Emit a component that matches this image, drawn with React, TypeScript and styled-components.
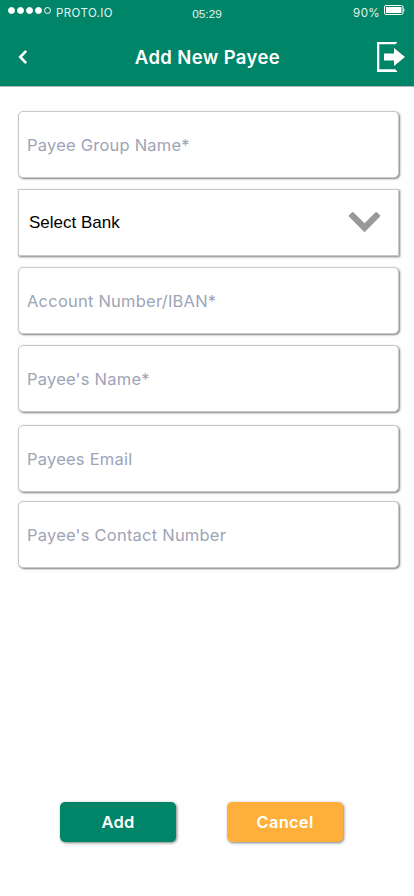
import React from "react";
import styled, { createGlobalStyle } from "styled-components";

const GlobalStyle = createGlobalStyle`
  *, *::before, *::after { box-sizing: border-box; }
  html, body { margin: 0; padding: 0; background: #fefefe; }
  body { font-family: Inter, sans-serif; }
`;

const Screen = styled.div`
  width: 414px;
  height: 896px;
  display: flex;
  flex-direction: column;
  background: #fefefe;
  overflow: hidden;
`;

const Header = styled.header`
  height: 87px;
  flex: none;
  background: #008568;
  border-bottom: 1px solid #b5b8b7;
  color: #fff;
`;

const StatusBar = styled.div`
  height: 27px;
  display: grid;
  grid-template-columns: 1fr auto 1fr;
  align-items: start;
  padding: 0 8px;
`;

const Carrier = styled.div`
  display: flex;
  align-items: flex-start;
  font-size: 11.5px;
  line-height: 14px;
  letter-spacing: 0.4px;
  color: #e4f3ef;
`;

const Signal = styled.div`
  display: flex;
  gap: 2px;
  margin: 7px 5px 0 0;
`;

const Dot = styled.i<{ $hollow?: boolean }>`
  width: 7px;
  height: 7px;
  border-radius: 50%;
  border: 1px solid #fff;
  background: ${(p) => (p.$hollow ? "transparent" : "#fff")};
`;

const StatusText = styled.span`
  margin-top: 6px;
`;

const Clock = styled.time`
  margin-top: 7px;
  font: 11.8px/14px "Liberation Sans", sans-serif;
  color: #e4f3ef;
`;

const Power = styled(Carrier)`
  justify-content: flex-end;
  gap: 4px;
  margin-right: 1px;

  svg { margin-top: 5px; display: block; }
`;

const TitleBar = styled.div`
  height: 59px;
  display: grid;
  grid-template-columns: 46px 1fr 46px;
  align-items: center;
`;

const IconButton = styled.button`
  border: 0;
  padding: 0;
  background: none;
  width: 46px;
  height: 59px;

  svg { display: block; }
`;

const Title = styled.h1`
  margin: 0;
  padding-left: 1px;
  text-align: center;
  font-size: 18.5px;
  font-weight: 600;
  letter-spacing: 0.38px;
  line-height: 24px;
`;

const Form = styled.form`
  flex: 1;
  display: flex;
  flex-direction: column;
  padding: 24px 15px 54px 18px;
`;

const Field = styled.input<{ $gap?: number }>`
  width: 381px;
  height: 67px;
  flex: none;
  margin: 0 0 ${(p) => p.$gap ?? 11}px;
  padding: 1px 8px 0;
  border: 1px solid #c8c8c8;
  border-radius: 5px;
  background: #fff;
  box-shadow: 1px 1px 2px rgba(0, 0, 0, 0.5);
  font: 400 16.5px Inter, sans-serif;
  letter-spacing: 0.22px;
  outline: none;

  &::placeholder { color: #9ea4b6; opacity: 1; }
`;

const BankSelect = styled.button`
  width: 381px;
  height: 67px;
  flex: none;
  margin: 0 0 11px;
  padding: 0 17px 0 10px;
  display: flex;
  align-items: center;
  justify-content: space-between;
  border: 1px solid #c8c8c8;
  background: #fff;
  box-shadow: 1px 1px 2px rgba(0, 0, 0, 0.5);
  font: 17px "Liberation Sans", sans-serif;
  color: #000;

  svg { margin-bottom: 2px; }
`;

const Actions = styled.div`
  display: flex;
  gap: 51px;
  margin-top: auto;
  padding-left: 42px;
`;

const ActionButton = styled.button<{ $tone: string }>`
  width: 116px;
  height: 40px;
  padding: 0;
  border: 0;
  border-radius: 5px;
  background: ${(p) => p.$tone};
  box-shadow: 1px 1px 3px rgba(0, 0, 0, 0.5);
  color: #fff;
  font: 600 16.5px Inter, sans-serif;
  letter-spacing: 0.25px;
`;

const BatteryIcon = () => (
  <svg width="21" height="10" viewBox="0 0 21 10">
    <rect x="0.5" y="0.5" width="18.5" height="9" rx="1.5" fill="none" stroke="#fff" />
    <rect x="2" y="2" width="15.5" height="6" fill="#fff" />
    <path d="M19.500 3c1.300.5 1.300 3.500 0 4z" fill="#fff" />
  </svg>
);

const BackIcon = () => (
  <svg width="46" height="59" viewBox="0 0 46 59">
    <path d="M26.200 23.800l-6 6.200 6 6.200" fill="none" stroke="#fff" strokeWidth="2.600" />
  </svg>
);

const ExitIcon = () => (
  <svg width="46" height="59" viewBox="0 0 46 59">
    <path d="M9 15h20.500l-2 2.300H11.300v25H27.500l2 2.700H9z" fill="#fff" />
    <path d="M16 26.500h10v-5.500l11 9-11 9v-5.500H16z" fill="#fff" />
  </svg>
);

const ChevronIcon = () => (
  <svg width="33" height="22" viewBox="0 0 33 22">
    <path d="M0.900 4.200L4.100 1.200Q5 .8 5.700 1.500L16.500 12.300 27.300 1.500Q28 .8 28.900 1.200L32.100 4.200Q32.500 5 31.900 5.700L17.300 20.500Q16.500 21 15.700 20.500L1.100 5.700Q.5 5 .9 4.200z" fill="#999" />
  </svg>
);

export default function App() {
  return (
    <>
      <GlobalStyle />
      <Screen>
        <Header>
          <StatusBar>
            <Carrier>
              <Signal>
                <Dot /><Dot /><Dot /><Dot /><Dot $hollow />
              </Signal>
              <StatusText>PROTO.IO</StatusText>
            </Carrier>
            <Clock>05:29</Clock>
            <Power>
              <StatusText>90%</StatusText>
              <BatteryIcon />
            </Power>
          </StatusBar>
          <TitleBar>
            <IconButton aria-label="Back"><BackIcon /></IconButton>
            <Title>Add New Payee</Title>
            <IconButton aria-label="Log out"><ExitIcon /></IconButton>
          </TitleBar>
        </Header>
        <Form>
          <Field placeholder="Payee Group Name*" />
          <BankSelect type="button">
            Select Bank
            <ChevronIcon />
          </BankSelect>
          <Field placeholder="Account Number/IBAN*" />
          <Field placeholder="Payee's Name*" $gap={13} />
          <Field placeholder="Payees Email" $gap={9} />
          <Field placeholder="Payee's Contact Number" />
          <Actions>
            <ActionButton type="button" $tone="#008568">Add</ActionButton>
            <ActionButton type="button" $tone="#ffb03c">Cancel</ActionButton>
          </Actions>
        </Form>
      </Screen>
    </>
  );
}
